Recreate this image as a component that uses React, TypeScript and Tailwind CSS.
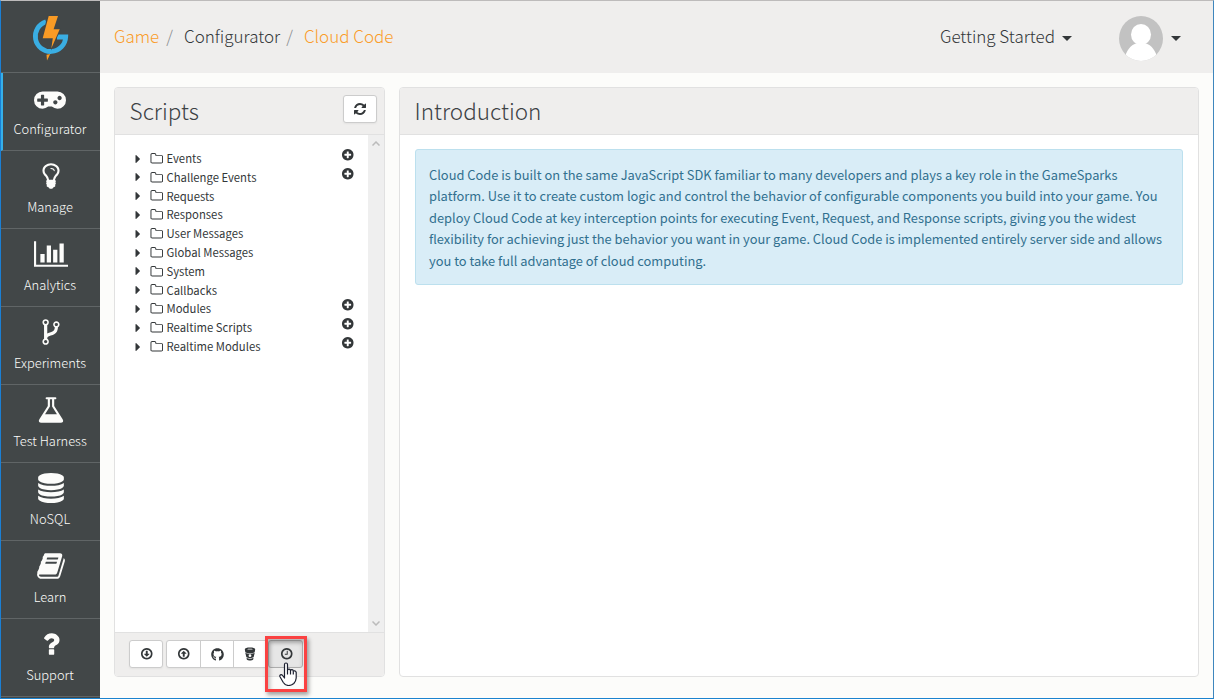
import { ReactNode } from "react";
import { FaGithub } from "react-icons/fa";

const sans = "font-['Noto_Sans_CJK_SC','Open_Sans',sans-serif]";

const circle =
  "M1664 896q0 209-103 385.5t-279.5 279.5-385.5 103-385.5-103-279.5-279.5-103-385.5 103-385.5 279.5-279.5 385.5-103 385.5 103 279.5 279.5 103 385.5z";
const ring =
  "M896 352q-148 0-273 73t-198 198-73 273 73 273 198 198 273 73 273-73 198-198 73-273-73-273-198-198-273-73z" + circle;

const icons = {
  gamepad:
    "M832 1088v-128q0-14-9-23t-23-9h-192v-192q0-14-9-23t-23-9h-128q-14 0-23 9t-9 23v192h-192q-14 0-23 9t-9 23v128q0 14 9 23t23 9h192v192q0 14 9 23t23 9h128q14 0 23-9t9-23v-192h192q14 0 23-9t9-23zm576 64q0-53-37.5-90.5t-90.5-37.5-90.5 37.5-37.5 90.5 37.5 90.5 90.5 37.5 90.5-37.5 37.5-90.5zm256-256q0-53-37.5-90.5t-90.5-37.5-90.5 37.5-37.5 90.5 37.5 90.5 90.5 37.5 90.5-37.5 37.5-90.5zm256 128q0 212-150 362t-362 150q-192 0-338-128h-220q-146 128-338 128-212 0-362-150t-150-362 150-362 362-150h896q212 0 362 150t150 362z",
  bulb:
    "M1120 576q0 13-9.5 22.5t-22.5 9.5-22.5-9.5-9.5-22.5q0-46-54-71t-106-25q-13 0-22.5-9.5t-9.5-22.5 9.5-22.5 22.5-9.5q50 0 99.5 16t87 54 37.5 90zm160 0q0-72-34.5-134t-90-101.5-123-62-136.5-22.5-136.5 22.5-123 62-90 101.5-34.5 134q0 101 68 180 10 11 30.5 33t30.5 33q128 153 141 298h228q13-145 141-298 10-11 30.5-33t30.5-33q68-79 68-180zm128 0q0 155-103 268-45 49-74.5 87t-59.5 95.5-34 107.5q47 28 47 82 0 37-25 64 25 27 25 64 0 52-45 81 13 23 13 47 0 46-31.5 71t-77.5 25q-20 44-60 70t-87 26-87-26-60-70q-46 0-77.5-25t-31.5-71q0-24 13-47-45-29-45-81 0-37 25-64-25-27-25-64 0-54 47-82-4-50-34-107.5t-59.5-95.5-74.5-87q-103-113-103-268 0-99 44.5-184.5t117-142 164-89 186.5-32.5 186.5 32.5 164 89 117 142 44.5 184.5z",
  chart:
    "M640 896v512h-256v-512h256zm384-512v1024h-256v-1024h256zm1024 1152v128h-2048v-1536h128v1408h1920zm-640-896v768h-256v-768h256zm384-384v1152h-256v-1152h256z",
  fork:
    "M672 1472q0-40-28-68t-68-28-68 28-28 68 28 68 68 28 68-28 28-68zm0-1152q0-40-28-68t-68-28-68 28-28 68 28 68 68 28 68-28 28-68zm640 128q0-40-28-68t-68-28-68 28-28 68 28 68 68 28 68-28 28-68zm96 0q0 52-26 96.5t-70 69.5q-2 287-226 414-67 38-203 81-128 40-169.5 71t-41.5 100v26q44 25 70 69.5t26 96.5q0 80-56 136t-136 56-136-56-56-136q0-52 26-96.5t70-69.5v-820q-44-25-70-69.5t-26-96.5q0-80 56-136t136-56 136 56 56 136q0 52-26 96.5t-70 69.5v497q54-26 154-57 55-17 87.5-29.5t70.5-31 59-39.5 40.5-51 28-69.5 8.5-91.5q-44-25-70-69.5t-26-96.5q0-80 56-136t136-56 136 56 56 136z",
  flask:
    "M1591 1448q56 89 21.5 152.5t-140.5 63.5h-1152q-106 0-140.5-63.5t21.5-152.5l503-793v-399h-64q-26 0-45-19t-19-45 19-45 45-19h512q26 0 45 19t19 45-19 45-45 19h-64v399zm-779-725l-272 429h712l-272-429-20-31v-436h-128v436z",
  database:
    "M896 768q237 0 443-43t325-127v170q0 69-103 128t-280 93.5-385 34.5-385-34.5-280-93.5-103-128v-170q119 84 325 127t443 43zm0 768q237 0 443-43t325-127v170q0 69-103 128t-280 93.5-385 34.5-385-34.5-280-93.5-103-128v-170q119 84 325 127t443 43zm0-384q237 0 443-43t325-127v170q0 69-103 128t-280 93.5-385 34.5-385-34.5-280-93.5-103-128v-170q119 84 325 127t443 43zm0-1152q208 0 385 34.5t280 93.5 103 128v128q0 69-103 128t-280 93.5-385 34.5-385-34.5-280-93.5-103-128v-128q0-69 103-128t280-93.5 385-34.5z",
  book:
    "M1703 478q40 57 18 129l-275 906q-19 64-76.5 107.5t-122.5 43.5h-923q-77 0-148.5-53.5t-99.5-131.5q-24-67-2-127 0-4 3-27t4-37q1-8-3-21.5t-3-19.5q2-11 8-21t16.5-23.5 16.5-23.5q23-38 45-91.5t30-91.5q3-10 .5-30t-.5-28q3-11 17-28t17-23q21-36 42-92t25-90q1-9-2.5-32t.5-28q4-13 22-30.5t22-22.5q19-26 42.5-84.5t27.5-96.5q1-8-3-25.5t-2-26.5q2-8 9-18t18-23 17-21q8-12 16.5-30.5t15-35 16-36 19.5-32 26.5-23.5 36-11.5 47.5 5.5l-1 3q38-9 51-9h761q74 0 114 56t18 130l-274 906q-36 119-71.5 153.5t-128.5 34.5h-869q-27 0-38 15-11 16-1 43 24 70 144 70h923q29 0 56-15.5t35-41.5l300-987q7-22 5-57 38 15 59 43zm-1064 2q-4 13 2 22.5t20 9.5h608q13 0 25.5-9.5t16.5-22.5l21-64q4-13-2-22.5t-20-9.5h-608q-13 0-25.5 9.5t-16.5 22.5zm-83 256q-4 13 2 22.5t20 9.5h608q13 0 25.5-9.5t16.5-22.5l21-64q4-13-2-22.5t-20-9.5h-608q-13 0-25.5 9.5t-16.5 22.5z",
  question:
    "M1088 1256v240q0 16-12 28t-28 12h-240q-16 0-28-12t-12-28v-240q0-16 12-28t28-12h240q16 0 28 12t12 28zm316-600q0 54-15.5 101t-35 76.5-55 59.5-57.5 43.5-61 35.5q-41 23-68.5 65t-27.5 67q0 17-12 32.5t-28 15.5h-240q-15 0-25.5-18.5t-10.5-37.5v-45q0-83 65-156.5t143-108.5q59-27 84-56t25-76q0-42-46.5-74t-107.5-32q-65 0-108 29-35 25-107 115-13 16-31 16-12 0-25-8l-164-125q-13-10-15.5-25t5.5-28q160-266 464-266 80 0 161 31t146 83 106 127.5 41 158.5z",
  refresh:
    "M1639 1056q0 5-1 7-64 268-268 434.5t-478 166.5q-146 0-282.5-55t-243.5-157l-129 129q-19 19-45 19t-45-19-19-45v-448q0-26 19-45t45-19h448q26 0 45 19t19 45-19 45l-137 137q71 66 161 102t187 36q134 0 250-65t186-179q11-17 53-117 8-23 30-23h192q13 0 22.5 9.5t9.5 22.5zm25-800v448q0 26-19 45t-45 19h-448q-26 0-45-19t-19-45 19-45l138-138q-148-137-349-137-134 0-250 65t-186 179q-11 17-53 117-8 23-30 23h-199q-13 0-22.5-9.5t-9.5-22.5v-7q65-268 270-434.5t480-166.5q146 0 284 55.5t245 156.5l130-129q19-19 45-19t45 19 19 45z",
  folder:
    "M1600 1312v-704q0-40-28-68t-68-28h-704q-40 0-68-28t-28-68v-64q0-40-28-68t-68-28h-320q-40 0-68 28t-28 68v960q0 40 28 68t68 28h1216q40 0 68-28t28-68zm128-704v704q0 92-66 158t-158 66h-1216q-92 0-158-66t-66-158v-960q0-92 66-158t158-66h320q92 0 158 66t66 158v32h672q92 0 158 66t66 158z",
  plus:
    "M1344 960v-128q0-26-19-45t-45-19h-256v-256q0-26-19-45t-45-19h-128q-26 0-45 19t-19 45v256h-256q-26 0-45 19t-19 45v128q0 26 19 45t45 19h256v256q0 26 19 45t45 19h128q26 0 45-19t19-45v-256h256q26 0 45-19t19-45z" + circle,
  caret:
    "M1152 896q0 26-19 45l-448 448q-19 19-45 19t-45-19-19-45v-896q0-26 19-45t45-19 45 19l448 448q19 19 19 45z",
  clock:
    "M1024 544v448q0 14-9 23t-23 9h-320q-14 0-23-9t-9-23v-64q0-14 9-23t23-9h224v-352q0-14 9-23t23-9h64q14 0 23 9t9 23z" + ring,
  down: "M1248 928q0 14-10 24l-319 319q-10 9-23 9t-23-9l-320-320q-15-16-7-35 8-20 30-20h192v-352q0-14 9-23t23-9h192q14 0 23 9t9 23v352h192q14 0 23 9t9 23z" + ring,
  up: "M1248 864q0-14-10-24l-319-319q-10-9-23-9t-23 9l-320 320q-15 16-7 35 8 20 30 20h192v352q0 14 9 23t23 9h192q14 0 23-9t9-23v-352h192q14 0 23-9t9-23z" + ring,
};

type IconName = keyof typeof icons;

function Icon({ name, className, width = 1792 }: { name: IconName; className: string; width?: number }) {
  return (
    <svg viewBox={`0 0 ${width} 1792`} className={className} fill="currentColor" fillRule="evenodd">
      <path d={icons[name]} />
    </svg>
  );
}

function Logo() {
  return (
    <svg viewBox="0 0 50 56" className="mr-px h-14 w-[50px]">
      <path d="M21 13.800A15.200 15.200 0 1 0 40.700 29H32" fill="none" stroke="#3aaee3" strokeWidth="4.800" />
      <path d="M22.700 7H34.300L30.300 20.300H36.300L26 42.500 26.300 31.200H16.500Z" fill="#424748" />
      <path d="M23.700 8H33L28.600 21.300H34.700L26.300 40.500 27.800 30.200H17.700Z" fill="#f99b25" />
      <path d="M21.500 46.700L25.200 46 22 52.500Z" fill="#f99b25" />
    </svg>
  );
}

const nav: { name: IconName; label: string; width?: number; cls: string }[] = [
  { name: "gamepad", label: "Configurator", width: 1920, cls: "h-[30px] w-8" },
  { name: "bulb", label: "Manage", cls: "ml-px size-[30px]" },
  { name: "chart", label: "Analytics", width: 2048, cls: "ml-px h-[30px] w-[34px]" },
  { name: "fork", label: "Experiments", cls: "ml-px size-[30px]" },
  { name: "flask", label: "Test Harness", cls: "ml-px size-[30px]" },
  { name: "database", label: "NoSQL", cls: "ml-px size-[30px]" },
  { name: "book", label: "Learn", cls: "ml-px size-[30px]" },
  { name: "question", label: "Support", cls: "ml-px size-[30px]" },
];

const folders = [
  { label: "Events", add: true },
  { label: "Challenge Events", add: true },
  { label: "Requests", add: false },
  { label: "Responses", add: false },
  { label: "User Messages", add: false },
  { label: "Global Messages", add: false },
  { label: "System", add: false },
  { label: "Callbacks", add: false },
  { label: "Modules", add: true },
  { label: "Realtime Scripts", add: true },
  { label: "Realtime Modules", add: true },
];

const intro = [
  "Cloud Code is built on the same JavaScript SDK familiar to many developers and plays a key role in the GameSparks",
  "platform. Use it to create custom logic and control the behavior of configurable components you build into your game. You",
  "deploy Cloud Code at key interception points for executing Event, Request, and Response scripts, giving you the widest",
  "flexibility for achieving just the behavior you want in your game. Cloud Code is implemented entirely server side and allows",
  "you to take full advantage of cloud computing.",
];

function Caret({ className }: { className?: string }) {
  return (
    <svg viewBox="0 0 10 5" className={`h-[5px] w-2.5 ${className ?? ""}`} fill="#333739">
      <path d="M0 0H10L5 5Z" />
    </svg>
  );
}

function BucketIcon() {
  return (
    <svg viewBox="0 0 12 14" className="mr-0.5 h-3.5 w-3" fill="currentColor" fillRule="evenodd">
      <path d="M.8 2.200C.8 1.100 3 .6 6 .6S11.200 1.100 11.200 2.200L10.700 5.200C9.500 6 8 6.300 6 6.300S2.500 6 1.300 5.200ZM3 2.200C4.500 2.700 7.500 2.700 9 2.200 7.500 1.700 4.500 1.700 3 2.200Z" />
      <path d="M1.300 5.700C3.800 7 8.200 7 10.700 5.700L9.700 10C8 11.400 4 11.400 2.300 10ZM6 7.300A1.400 1.400 0 1 0 6 10.100 1.400 1.400 0 1 0 6 7.300Z" />
      <path d="M2.500 10.700C4.500 12 7.500 12 9.500 10.700L9.200 12.400C8 13.700 4 13.700 2.800 12.400Z" />
    </svg>
  );
}

function PanelHeader({ title, children }: { title: string; children?: ReactNode }) {
  return (
    <div className="flex h-[47px] shrink-0 items-center justify-between rounded-t-[3px] border-b border-[#e1e1e1] bg-[#efeeed] pr-[7px] pl-[14.6px]">
      <h2 className="mb-[3px] text-[22.5px] leading-8 font-light text-[#3c4144]">{title}</h2>
      {children}
    </div>
  );
}

export default function App() {
  return (
    <div className={`flex h-[699px] w-[1214px] overflow-hidden border border-t-[#bdbbbb] border-r-[#3e86bd] border-b-[#1b83cf] border-l-[#1a7fd4] bg-[#fcfcfa] text-[#333739] ${sans}`}>
      <nav className="flex w-[99px] shrink-0 flex-col overflow-hidden bg-[#424748]">
        <div className="flex h-[72px] shrink-0 justify-center border-b border-[#606566] pt-[7px]">
          <Logo />
        </div>
        {nav.map((n, i) => (
          <a
            key={n.label}
            className={`flex h-[78px] shrink-0 flex-col items-center border-b border-[#606566] pt-[9.5px] text-[#fcfcfa] ${i === 0 ? "border-l-2 border-l-[#35b0ea] pr-[3px]" : "pr-px"}`}
          >
            <Icon name={n.name} width={n.width} className={n.cls} />
            <span className="mt-[6.5px] text-[12.9px] leading-5 font-light whitespace-nowrap">{n.label}</span>
          </a>
        ))}
      </nav>

      <div className="flex min-w-0 flex-1 flex-col">
        <header className="flex h-[72px] shrink-0 items-center bg-[#efeeed] pr-8 pl-3.5 text-[17px] font-light">
          <div className="mb-0.5 flex">
            <span className="text-[#fa9c28]">Game</span>
            <span className="ml-[7px] text-[#8a8d8f]">/</span>
            <span className="ml-[11px]">Configurator</span>
            <span className="ml-1.5 text-[#8a8d8f]">/</span>
            <span className="ml-[11px] text-[#fa9c28]">Cloud Code</span>
          </div>
          <div className="ml-auto flex items-center gap-[7px]">
            <span className="mb-0.5">Getting Started</span>
            <Caret className="mt-0.5" />
          </div>
          <div className="mt-0.5 ml-[47px] flex items-center gap-2">
            <svg viewBox="0 0 44 45" className="h-[45px] w-11">
              <clipPath id="avatar">
                <ellipse cx="22" cy="22.500" rx="22" ry="22.500" />
              </clipPath>
              <g clipPath="url(#avatar)">
                <rect width="44" height="45" fill="#c2c2c2" />
                <ellipse cx="22" cy="18.500" rx="10" ry="10.500" fill="#fff" />
                <path d="M5 45C7 34 12 29 17 27.500H27C32 29 37 34 39 45Z" fill="#fff" />
              </g>
            </svg>
            <Caret />
          </div>
        </header>

        <main className="flex min-h-0 flex-1 gap-3.5 pt-3.5 pr-3.5 pb-[21px] pl-3.5">
          <section className="flex w-[271px] shrink-0 flex-col rounded border border-[#e1e1e1] bg-white">
            <PanelHeader title="Scripts">
              <button className="mb-1 flex h-7 w-[34px] items-center justify-center rounded-[3px] border border-[#ccc] bg-white shadow-xs">
                <Icon name="refresh" className="size-3.5" />
              </button>
            </PanelHeader>
            <div className="flex min-h-0 flex-1">
              <ul className="flex-1 pt-[13.7px] pr-3.5 pl-[15.5px]">
                {folders.map((f) => (
                  <li key={f.label} className="flex h-[18.8px] items-center">
                    <Icon name="caret" className="mt-px size-3.5" />
                    <Icon name="folder" className="ml-[5px] mt-px size-[13.5px]" />
                    <span className="ml-[3.5px] text-[11.3px] leading-[18px]">{f.label}</span>
                    {f.add && <Icon name="plus" className="mb-[7px] ml-auto size-[13.5px]" />}
                  </li>
                ))}
              </ul>
              <div className="flex w-4 flex-col items-center justify-between bg-[#efefef] py-1.5">
                <svg viewBox="0 0 8 5" className="h-[5px] w-2" fill="none" stroke="#bbb" strokeWidth="1.5">
                  <path d="M.5 4.500L4 1 7.500 4.500" />
                </svg>
                <svg viewBox="0 0 8 5" className="h-[5px] w-2" fill="none" stroke="#bbb" strokeWidth="1.5">
                  <path d="M.5 .5L4 4 7.500 .5" />
                </svg>
              </div>
            </div>
            <footer className="flex h-11 shrink-0 rounded-b-[3px] border-t border-[#e1e1e1] bg-[#efeeed] pt-[7px] pl-3.5">
              <button className="flex h-7 w-[34px] items-center justify-center rounded-[3px] border border-[#ccc] bg-white pl-px shadow-xs">
                <Icon name="down" className="size-[13.5px]" />
              </button>
              <div className="ml-[3px] flex h-7 rounded-[3px] border border-[#ccc] bg-white shadow-xs">
                <button className="flex w-[34px] items-center justify-center border-r border-[#ccc]">
                  <Icon name="up" className="size-[13.5px]" />
                </button>
                <button className="flex w-[33px] items-center justify-center border-r border-[#ccc]">
                  <FaGithub className="size-[13px]" />
                </button>
                <button className="flex w-[33px] items-center justify-center">
                  <BucketIcon />
                </button>
              </div>
              <div className="relative">
                <button className="flex h-7 w-[35px] items-center justify-center rounded-[3px] border border-[#adadad] bg-[#e6e6e6] pl-0.5 shadow-[inset_0_2px_4px_rgba(0,0,0,0.12)]">
                  <Icon name="clock" className="size-[13.5px]" />
                </button>
                <div className="pointer-events-none absolute -top-1 -left-[3px] h-14 w-[42px] border-3 border-[#fa4242] shadow-[2px_3px_4px_rgba(0,0,0,0.35),inset_2px_3px_4px_rgba(0,0,0,0.25)]" />
                <svg viewBox="0 0 18 24" className="absolute top-[22px] left-[11px] h-6 w-[18px]" fill="#fff" stroke="#1c2030" strokeWidth="1.2" strokeLinejoin="round">
                  <path d="M5.500 15V2.500Q5.500 1 7 1T8.500 2.500V8.500Q8.700 7.200 10 7.200T11.500 8.700Q11.800 7.700 13 7.700T14.300 9.200Q14.700 8.700 15.800 8.900T17.200 10.500V16Q17 19 14.800 21.500 12.500 23.500 9.500 23.500 6 23.300 4.300 20.500L1 14.700Q.4 13.400 1.500 12.900T3.500 13.400L5.500 16Z" />
                  <path d="M8.500 8.500V12.500M11.500 8.700V12.500M14.300 9.200V12.500" fill="none" />
                </svg>
              </div>
            </footer>
          </section>

          <section className="flex flex-1 flex-col rounded border border-[#e1e1e1] bg-white">
            <PanelHeader title="Introduction" />
            <div className="px-[15px] pt-3.5">
              <p className="h-[136px] rounded-[3px] border border-[#bce0ee] bg-[#d9edf7] pt-[13.6px] pl-[13px] text-[12.87px] leading-[21.5px] whitespace-nowrap text-[#31708f]">
                {intro.map((line) => (
                  <span key={line} className="block">
                    {line}
                  </span>
                ))}
              </p>
            </div>
          </section>
        </main>
      </div>
    </div>
  );
}
